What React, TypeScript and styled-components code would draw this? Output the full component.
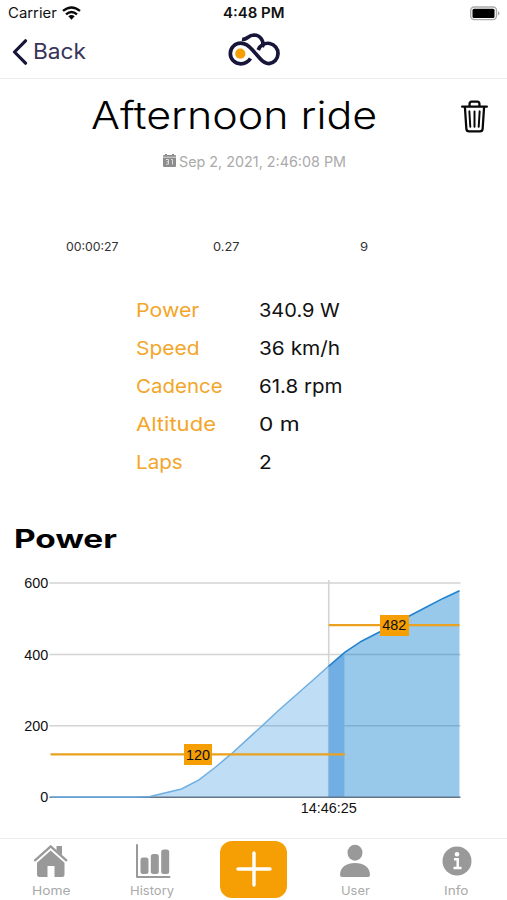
import React, { useLayoutEffect, useRef, useState } from "react";
import styled, { createGlobalStyle } from "styled-components";

const ORANGE = "#f59f04";
const NAVY = "#17153a";
const GREY = "#999999";

const GlobalStyle = createGlobalStyle`
  * { box-sizing: border-box; }
  body { margin: 0; background: #fff; font-family: Inter, "Open Sans", sans-serif; overflow: hidden; }
  svg { display: block; flex: none; }
`;

const Screen = styled.main`
  width: 507px;
  height: 900px;
  display: flex;
  flex-direction: column;
  background: #fff;
  color: #111;
`;

const LabelBox = styled.span<{ $width: number }>`
  display: block;
  flex: none;
  width: ${(p) => p.$width}px;
  white-space: nowrap;
`;

const LabelText = styled.span<{ $size: number; $color: string; $weight: number }>`
  display: block;
  width: max-content;
  transform-origin: 0 50%;
  font-size: ${(p) => p.$size}px;
  font-weight: ${(p) => p.$weight};
  color: ${(p) => p.$color};
  line-height: 1.2;
`;

type LabelProps = { text: string; width: number; size: number; color?: string; weight?: number };

/* Stretches a wide geometric label to the width reserved for it. */
function Label({ text, width, size, color = "#111", weight = 400 }: LabelProps) {
  const ref = useRef<HTMLSpanElement>(null);
  const [scale, setScale] = useState(1);
  useLayoutEffect(() => {
    if (ref.current) setScale(width / ref.current.offsetWidth);
  }, [text, width, size, weight]);
  return (
    <LabelBox $width={width}>
      <LabelText ref={ref} $size={size} $color={color} $weight={weight} style={{ transform: `scaleX(${scale})` }}>
        {text}
      </LabelText>
    </LabelBox>
  );
}

const StatusBar = styled.div`
  display: grid;
  grid-template-columns: 1fr 62px 1fr;
  align-items: center;
  height: 27px;
  padding: 0 7px 0 8px;
`;
const Carrier = styled.div`
  display: flex;
  align-items: center;
  gap: 5px;
`;
const Battery = styled.div`
  display: flex;
  justify-content: flex-end;
`;

const Header = styled.header`
  display: grid;
  grid-template-columns: 1fr 54px 1fr;
  align-items: center;
  height: 52px;
  padding: 0 0 2px 12px;
  border-bottom: 1px solid #ececec;
`;
const BackButton = styled.div`
  display: flex;
  align-items: center;
  gap: 5px;
`;
const LogoSlot = styled.div`
  margin: -4px 0 0 -6px;
`;

const TitleRow = styled.div`
  display: flex;
  align-items: center;
  justify-content: space-between;
  height: 73px;
  padding: 1px 18px 0 91px;
`;
const DateRow = styled.div`
  display: flex;
  align-items: center;
  gap: 3px;
  height: 20px;
  padding-left: 163px;
`;
const CalendarSlot = styled.div`
  height: 16px;
`;
const Totals = styled.div`
  display: grid;
  grid-template-columns: 147px 147px 1fr;
  align-items: center;
  height: 20px;
  margin-top: 65px;
  padding-left: 66px;
`;
const Metrics = styled.div`
  display: grid;
  grid-template-columns: 123px 1fr;
  grid-auto-rows: 37.8px;
  align-items: center;
  margin-top: 35px;
  padding-left: 136px;
`;
const SectionTitle = styled.div`
  display: flex;
  align-items: center;
  height: 30px;
  margin-top: 43px;
  padding-left: 14px;
`;
const ChartArea = styled.section`
  height: 284px;
`;
const ChartText = styled.text`
  font-family: "Liberation Sans", Arial, sans-serif;
  font-size: 14.4px;
  fill: #111;
`;

const TabBar = styled.nav`
  display: grid;
  grid-template-columns: repeat(5, 1fr);
  height: 62px;
  border-top: 1px solid #ececec;
`;
const Tab = styled.div`
  display: flex;
  flex-direction: column;
  align-items: center;
  justify-content: space-between;
  padding: 4px 0 3px 1px;
`;
const AddButton = styled.div`
  display: flex;
  align-items: center;
  justify-content: center;
  width: 67px;
  height: 57px;
  margin: -2px 0 0;
  border-radius: 12px;
  background: ${ORANGE};
`;

const metrics = [
  { name: "Power", nameWidth: 63, value: "340.9 W", valueWidth: 81 },
  { name: "Speed", nameWidth: 63, value: "36 km/h", valueWidth: 81 },
  { name: "Cadence", nameWidth: 87, value: "61.8 rpm", valueWidth: 84 },
  { name: "Altitude", nameWidth: 80, value: "0 m", valueWidth: 40 },
  { name: "Laps", nameWidth: 47, value: "2", valueWidth: 13 },
];

const Logo = () => (
  <svg width="54" height="36" viewBox="0 0 54 36" fill="none" stroke={NAVY} strokeWidth="3.7">
    <path d="M23.5 26.5C20.5 31 17 31.8 13.6 31.8A10.3 10.3 0 0 1 13.6 11.2C19 11.2 22 14 25.5 18L33 26.5C36 30 38.5 31.6 42 31.6A10.2 10.2 0 1 0 31.2 18" />
    <path d="M15 7.3C20.5 8.3 20.5 3 27 3C33.5 3.2 37.5 9.5 35.3 15" />
    <circle cx="13.3" cy="21.7" r="5.1" fill={ORANGE} stroke="none" />
  </svg>
);

const TrashIcon = () => (
  <svg width="29" height="35" viewBox="0 0 28 34" fill="none" stroke="#080808" strokeWidth="2.2" strokeLinecap="round" strokeLinejoin="round">
    <path d="M2 7.5H26M4.7 8L6.1 29Q6.3 31.4 8.7 31.4H19.3Q21.7 31.4 21.9 29L23.3 8M9.2 7V4.8Q9.2 2.5 11.3 2.5H16.7Q18.8 2.5 18.8 4.8V7" />
    <path d="M9 12L9.9 27M14 12V27M19 12L18.1 27" strokeWidth="1.9" />
  </svg>
);

const PowerChart = () => (
  <svg width="507" height="284" viewBox="0 554 507 284">
    <g stroke="#d3d3d3" strokeWidth="1.6">
      <path d="M49.5 583H460.5M49.5 654.5H460.5M49.5 725.7H460.5" />
      <path d="M328.7 580V797" />
    </g>
    <path d="M135 797L150 796.5 181.5 789 199 779.8 215 767.5 231 754.2 247 739.6 263 725 279 710 295.5 695.5 312 681 328.5 666.3V797Z" fill="#2b8ddf" fillOpacity=".3" />
    <path d="M328.5 666.3L344.7 652.3V797H328.5Z" fill="#71aee4" />
    <path d="M344.7 652.3L361.5 641.2 380 631.7 394 623.5 409.3 616 427 606.8 443 598.4 459.5 590.7V797H344.7Z" fill="#067ccb" fillOpacity=".41" />
    <path d="M49.5 797.2H460.5" stroke="#62758a" strokeWidth="1.5" />
    <path d="M51 797H135L150 796.5 181.5 789 199 779.8 215 767.5 231 754.2 247 739.6 263 725 279 710 295.5 695.5 312 681 328.5 666.3" fill="none" stroke="#6eafe1" strokeWidth="1.5" />
    <path d="M328.5 666.3L344.7 652.3 361.5 641.2 380 631.7 394 623.5 409.3 616 427 606.8 443 598.4 459.5 590.7" fill="none" stroke="#2383cf" strokeWidth="1.6" />
    <g stroke="#e9a11f" strokeWidth="2.3">
      <path d="M50.5 754.4H345M328.7 625.2H459.5" />
    </g>
    <rect x="184" y="744" width="28" height="21" fill={ORANGE} />
    <rect x="380" y="615" width="29" height="21" fill={ORANGE} />
    <ChartText x="198" y="759.6" textAnchor="middle">120</ChartText>
    <ChartText x="394.3" y="630.2" textAnchor="middle">482</ChartText>
    <ChartText x="48.3" y="588.4" textAnchor="end">600</ChartText>
    <ChartText x="48.3" y="659.8" textAnchor="end">400</ChartText>
    <ChartText x="48.3" y="731.2" textAnchor="end">200</ChartText>
    <ChartText x="48.3" y="802.3" textAnchor="end">0</ChartText>
    <ChartText x="328.8" y="813.2" textAnchor="middle">14:46:25</ChartText>
  </svg>
);

const HomeIcon = () => (
  <svg width="36" height="36" viewBox="0 0 36 36" fill={GREY}>
    <path d="M2 17.3L17.7 3.3 33.3 17.3" fill="none" stroke={GREY} strokeWidth="2.3" strokeLinecap="round" strokeLinejoin="round" />
    <path d="M23.5 3H29V12.2L23.5 7.2Z" />
    <path d="M17.7 7.6L31.5 19.7V31.5Q31.5 34 29 34H21.5V23H14.5V34H6.5Q4 34 4 31.5V19.7Z" />
  </svg>
);

const HistoryIcon = () => (
  <svg width="36" height="36" viewBox="0 0 36 36" fill={GREY}>
    <path d="M2 2V34H34.5" fill="none" stroke={GREY} strokeWidth="2" strokeLinecap="round" strokeLinejoin="round" />
    <rect x="5.5" y="14.5" width="8" height="16.5" rx="2.5" />
    <rect x="15.8" y="11" width="8" height="20" rx="2.5" />
    <rect x="26.2" y="6.5" width="8" height="24.5" rx="2.5" />
  </svg>
);

const UserIcon = () => (
  <svg width="34" height="36" viewBox="0 0 34 36" fill={GREY}>
    <ellipse cx="17" cy="9.7" rx="7.5" ry="8" />
    <path d="M2 32C2 24 8.5 20 17 20S32 24 32 32Q32 34 30 34H4Q2 34 2 32Z" />
  </svg>
);

const InfoIcon = () => (
  <svg width="30" height="36" viewBox="0 0 30 36">
    <circle cx="15" cy="18" r="14.5" fill={GREY} />
    <circle cx="15" cy="11.3" r="2.3" fill="#fff" />
    <path d="M12 16.3H15.7V24.5M11.5 24.9H19.5" fill="none" stroke="#fff" strokeWidth="2.5" />
  </svg>
);

export default function App() {
  return (
    <>
      <GlobalStyle />
      <Screen>
        <StatusBar>
          <Carrier>
            <Label text="Carrier" width={49} size={14} />
            <svg width="19" height="14" viewBox="0 0 19 14" fill="none" stroke="#080808" strokeWidth="2.4">
              <path d="M1 4.9Q9.5-2.1 18 4.9M4 8.3Q9.5 3.6 15 8.3" />
              <path d="M6.3 10.3Q9.5 7.7 12.7 10.3L9.5 13.7Z" fill="#080808" stroke="none" />
            </svg>
          </Carrier>
          <Label text="4:48 PM" width={62} size={14} weight={600} />
          <Battery>
            <svg width="30" height="15" viewBox="0 0 30 15">
              <rect x="0.7" y="1" width="25.8" height="12.6" rx="3.5" fill="#fff" stroke="#aaa" strokeWidth="1.4" />
              <rect x="2.5" y="2.7" width="22" height="9.2" rx="1.5" fill="#000" />
              <path d="M28 5Q31 7.3 28 9.6Z" fill="#aaa" />
            </svg>
          </Battery>
        </StatusBar>
        <Header>
          <BackButton>
            <svg width="16" height="26" viewBox="0 0 16 26">
              <path d="M13.5 1.8L2.5 13L13.5 24.2" fill="none" stroke={NAVY} strokeWidth="3.2" strokeLinecap="round" strokeLinejoin="round" />
            </svg>
            <Label text="Back" width={53} size={21} color="#37345a" />
          </BackButton>
          <LogoSlot><Logo /></LogoSlot>
        </Header>
        <TitleRow>
          <Label text="Afternoon ride" width={286} size={38} color="#000" weight={300} />
          <TrashIcon />
        </TitleRow>
        <DateRow>
          <CalendarSlot>
            <svg width="13" height="13" viewBox="0 0 13 13">
              <path d="M1 1H2V0H4V1H9V0H11V1H12Q13 1 13 2V12Q13 13 12 13H1Q0 13 0 12V2Q0 1 1 1Z" fill="#8c8c8c" />
              <path d="M0 3.2H13M3 5.5H5.5V10.2H3M3.5 7.8H5.5M8 5.5H9.5V10.5" fill="none" stroke="#ddd" strokeWidth="1" />
            </svg>
          </CalendarSlot>
          <Label text="Sep 2, 2021, 2:46:08 PM" width={167.5} size={14.3} color="#aaa" />
        </DateRow>
        <Totals>
          <Label text="00:00:27" width={53} size={12.3} color="#333" />
          <Label text="0.27" width={26} size={12.3} color="#333" />
          <Label text="9" width={8.5} size={12.3} color="#333" />
        </Totals>
        <Metrics>
          {metrics.map((m) => (
            <React.Fragment key={m.name}>
              <Label text={m.name} width={m.nameWidth} size={19.3} color="#f3a62a" />
              <Label text={m.value} width={m.valueWidth} size={19.3} />
            </React.Fragment>
          ))}
        </Metrics>
        <SectionTitle>
          <Label text="Power" width={103.5} size={25.5} weight={700} color="#000" />
        </SectionTitle>
        <ChartArea><PowerChart /></ChartArea>
        <TabBar>
          <Tab><HomeIcon /><Label text="Home" width={39} size={12} color="#aaa" /></Tab>
          <Tab><HistoryIcon /><Label text="History" width={44.5} size={12} color="#aaa" /></Tab>
          <Tab>
            <AddButton>
              <svg width="36" height="36" viewBox="0 0 36 36">
                <path d="M18 2V34M2 18H34" stroke="#fff" strokeWidth="3.4" strokeLinecap="round" />
              </svg>
            </AddButton>
          </Tab>
          <Tab><UserIcon /><Label text="User" width={29} size={12} color="#aaa" /></Tab>
          <Tab><InfoIcon /><Label text="Info" width={25} size={12} color="#aaa" /></Tab>
        </TabBar>
      </Screen>
    </>
  );
}
